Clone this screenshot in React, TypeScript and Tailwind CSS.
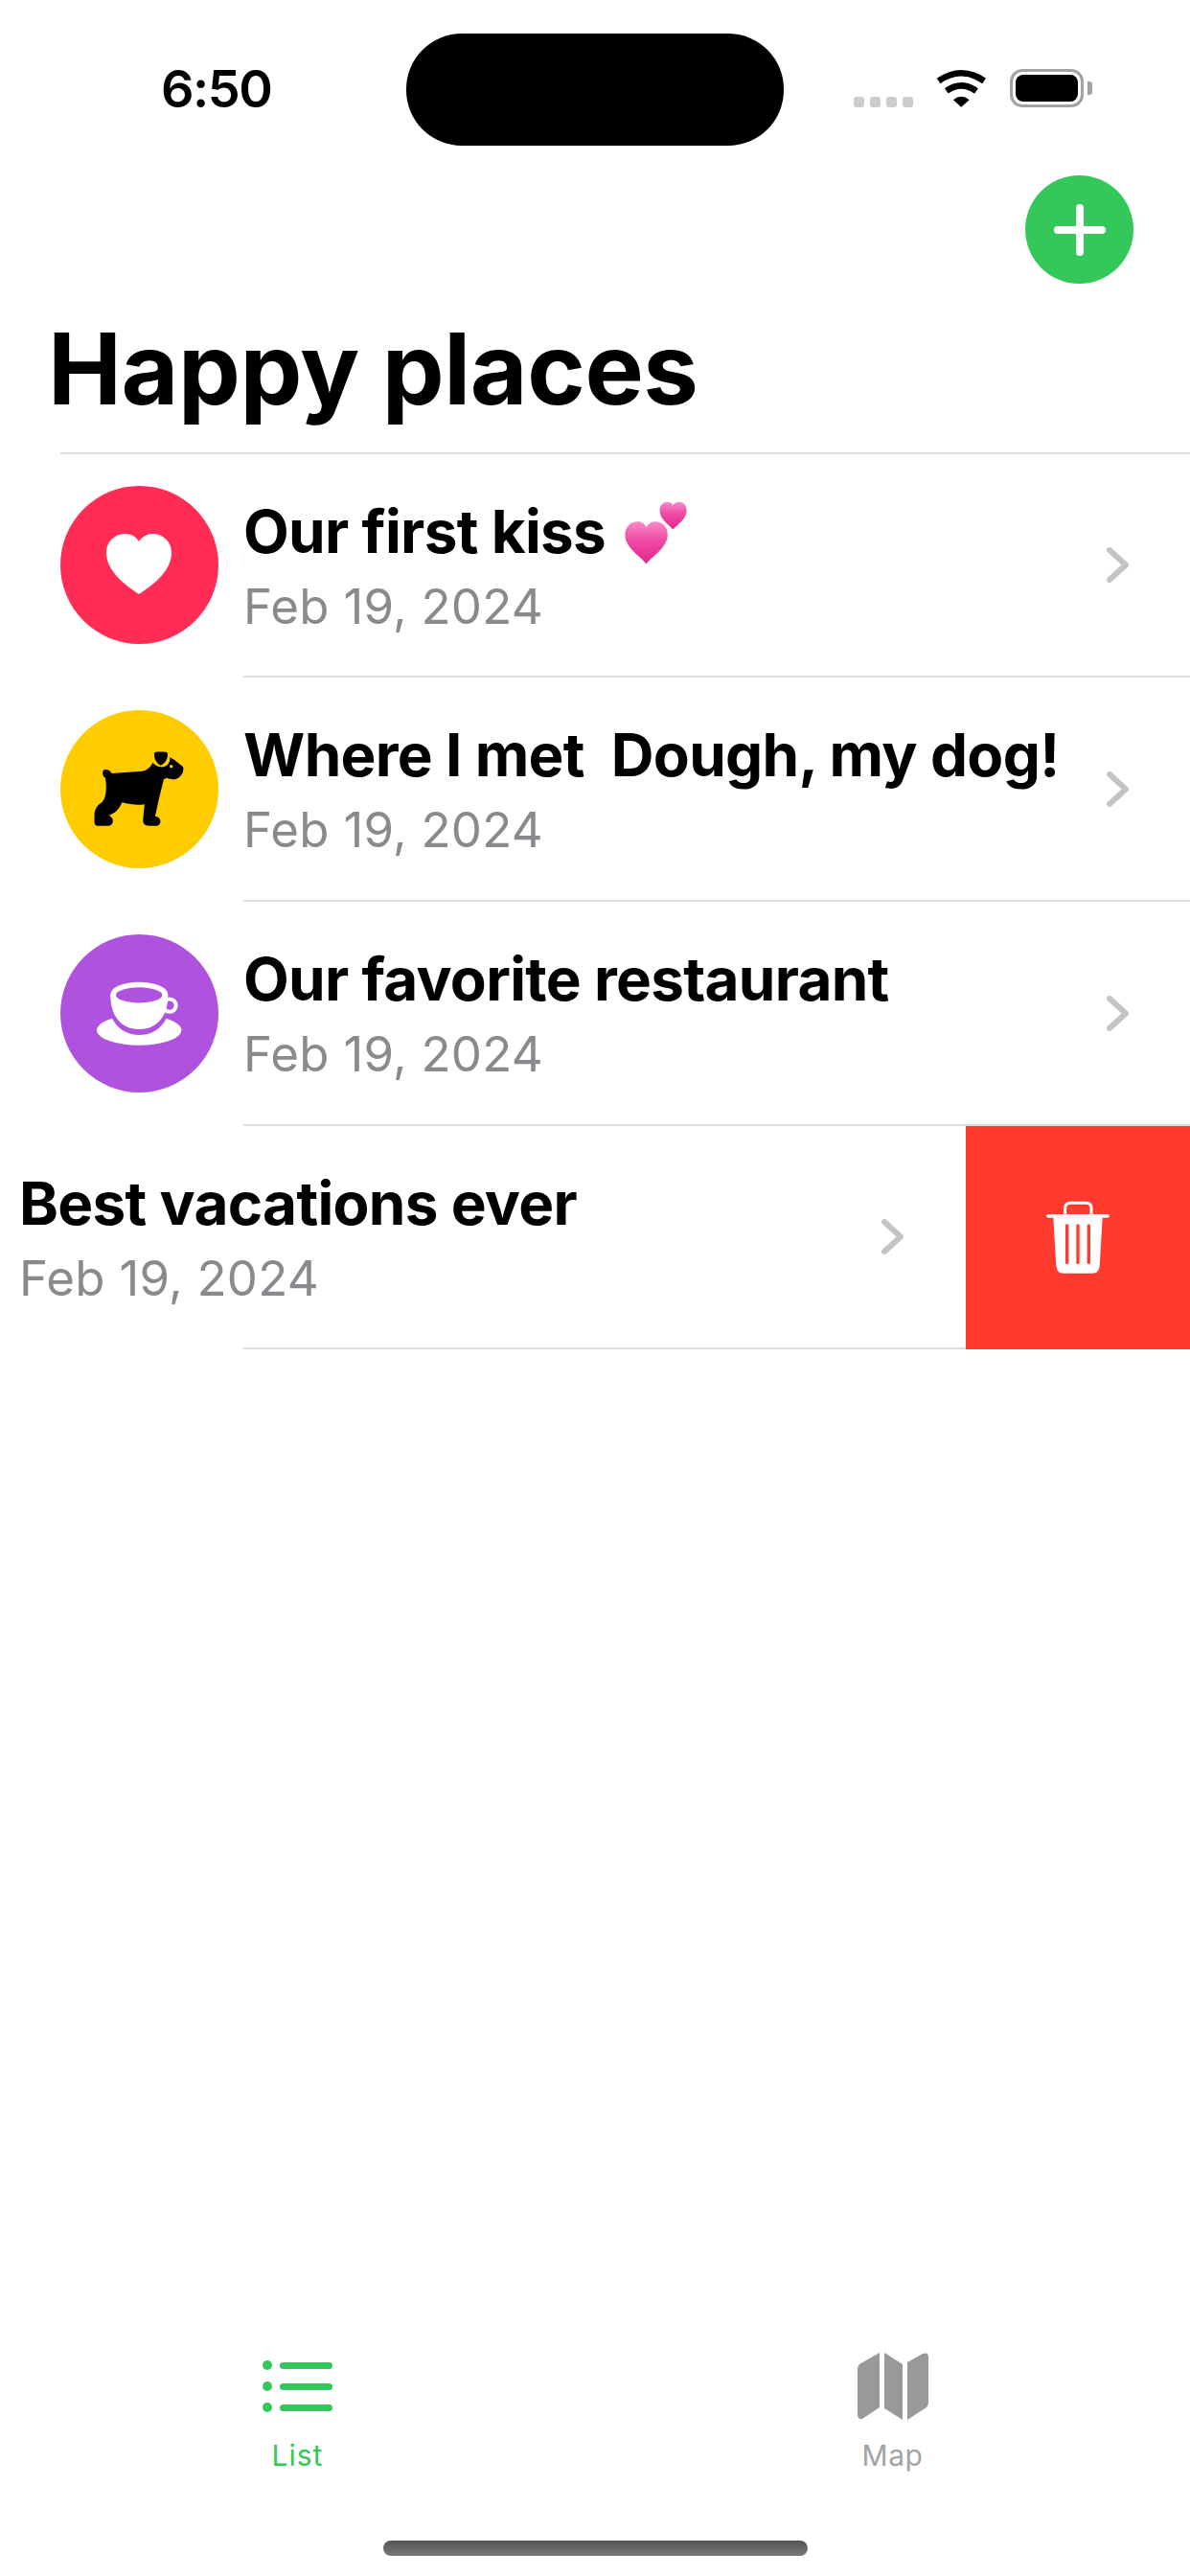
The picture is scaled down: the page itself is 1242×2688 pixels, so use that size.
import { ReactNode } from "react";

function Heart() {
  return (
    <svg viewBox="0 0 165 165" className="h-[165px] w-[165px]">
      <path
        d="M82 113 C70 105 48 90 48 70 C48 57 58 50 68 50 C74 50 79 53 82 58 C85 53 91 50 96 50 C106 50 116 57 116 70 C116 90 94 105 82 113 Z"
        fill="white"
      />
    </svg>
  );
}

function Dog() {
  return (
    <svg viewBox="40 35 492 492" className="h-[165px] w-[165px]">
      <path
        d="M178 220 C170 222 168 240 180 246 L182 262 C184 290 180 315 165 325 C150 335 146 350 146 365 L146 385 Q147 395 158 395 L190 395 C208 392 208 368 190 362 C210 358 225 340 232 322 C255 328 280 332 302 328 L297 378 C297 390 305 395 315 395 L340 395 C356 392 356 368 335 365 L347 310 L362 250 L372 246 C385 252 400 252 408 245 C420 238 425 222 422 212 L392 188 L380 182 C384 200 368 215 352 212 C340 210 332 204 328 198 C320 212 310 222 295 225 L200 232 C196 224 188 218 178 220 Z"
        fill="black"
      />
      <path
        d="M332 172 Q332 165 342 165 L362 165 Q374 165 374 172 C374 188 366 200 352 207 C340 200 332 188 332 172 Z"
        fill="black"
      />
      <circle cx="385" cy="210" r="5" fill="#ffcc00" />
    </svg>
  );
}

function Cup() {
  return (
    <svg viewBox="40 17 492 492" className="h-[165px] w-[165px]">
      <ellipse cx="285" cy="315" rx="132" ry="47" fill="white" />
      <path
        d="M196 205 C196 265 225 318 285 318 C345 318 375 265 375 205 Z"
        fill="white"
        stroke="#af52de"
        strokeWidth="24"
      />
      <circle cx="380" cy="238" r="20" fill="none" stroke="white" strokeWidth="12" />
      <path d="M196 205 C196 180 240 165 285 165 C330 165 375 180 375 205 C375 268 345 312 285 312 C225 312 196 268 196 205 Z" fill="white" />
      <ellipse cx="285" cy="206" rx="72" ry="24" fill="#af52de" />
    </svg>
  );
}

function Chevron() {
  return (
    <svg viewBox="0 0 23 37" className="h-[37px] w-[23px] shrink-0">
      <path
        d="M3 3 L20 18.5 L3 34"
        fill="none"
        stroke="#c4c4c7"
        strokeWidth="6"
        strokeLinecap="round"
        strokeLinejoin="round"
      />
    </svg>
  );
}

function Hearts() {
  return (
    <svg viewBox="90 95 200 205" className="-mb-[3px] ml-[5px] inline-block h-[68px] w-[67px] -translate-y-[5px]">
      <defs>
        <linearGradient id="pink" x1="0" y1="0" x2="0" y2="1">
          <stop offset="0" stopColor="#f98ccb" />
          <stop offset="0.4" stopColor="#ef4fa6" />
          <stop offset="1" stopColor="#e3248c" />
        </linearGradient>
      </defs>
      <path
        d="M244 187 C230 172 202 155 202 127 C202 110 214 100 227 100 C234 100 241 104 244 111 C248 104 255 100 262 100 C276 100 287 110 287 127 C287 155 258 172 244 187 Z"
        fill="url(#pink)"
      />
      <path
        d="M160 295 C140 270 93 245 93 203 C93 178 112 162 132 162 C144 162 155 168 160 180 C166 168 177 162 189 162 C210 162 227 178 227 203 C227 245 180 270 160 295 Z"
        fill="url(#pink)"
      />
    </svg>
  );
}

function RowText({ title, extra }: { title: string; extra?: ReactNode }) {
  return (
    <div className="min-w-0 flex-1">
      <div className="whitespace-pre text-[62px] leading-[85px] font-bold tracking-[-0.7px] text-black">
        {title}
        {extra}
      </div>
      <div className="text-[51px] leading-[71px] tracking-[0.25px] text-[#8a8a8e]">Feb 19, 2024</div>
    </div>
  );
}

function PlaceRow({
  color,
  icon,
  title,
  extra,
  height,
}: {
  color: string;
  icon: ReactNode;
  title: string;
  extra?: ReactNode;
  height: string;
}) {
  return (
    <>
      <div className={`flex items-center gap-[26px] pl-[63px] pr-[64px] ${height}`}>
        <div className={`h-[165px] w-[165px] shrink-0 rounded-full ${color}`}>{icon}</div>
        <RowText title={title} extra={extra} />
        <Chevron />
      </div>
      <div className="ml-[254px] h-[2px] bg-[#dedee0]" />
    </>
  );
}

export default function App() {
  return (
    <div className="flex h-[2688px] w-[1242px] flex-col overflow-hidden bg-white font-['Inter',sans-serif]">
      {/* status bar */}
      <div className="flex h-[183px] items-start pt-[35px]">
        <div className="ml-[168px] w-[116px] pt-[35px] text-[54px] leading-[46px] font-semibold tracking-[-1.5px] whitespace-nowrap text-black">
          6:50
        </div>
        <div className="ml-[140px] h-[117px] w-[394px] rounded-[58px] bg-black" />
        <div className="ml-[73px] flex items-start pt-[37px]">
          <div className="mt-[29px] flex gap-[6px]">
            <div className="h-[11px] w-[11px] rounded-[3px] bg-[#cccccc]" />
            <div className="h-[11px] w-[11px] rounded-[3px] bg-[#cccccc]" />
            <div className="h-[11px] w-[11px] rounded-[3px] bg-[#cccccc]" />
            <div className="h-[11px] w-[11px] rounded-[3px] bg-[#cccccc]" />
          </div>
          <svg viewBox="318 65 160 122" className="ml-[24px] h-[40px] w-[53px]">
            <path d="M325 103 Q397 53 470 103" fill="none" stroke="black" strokeWidth="20" />
            <path d="M350 135 Q397 101 445 135" fill="none" stroke="black" strokeWidth="20" />
            <path d="M372 163 Q397 143 423 163 L397 186 Z" fill="black" />
          </svg>
          <div className="ml-[24px] h-[40px] w-[77px] rounded-[13px] border-[3px] border-[#a3a3a3] p-[3px]">
            <div className="h-full w-full rounded-[8px] bg-black" />
          </div>
          <div className="mt-[13px] ml-[4px] h-[14px] w-[5px] rounded-r-[3px] bg-[#a3a3a3]" />
        </div>
      </div>

      {/* add button */}
      <div className="flex justify-end pr-[59px]">
        <button type="button" className="flex h-[113px] w-[113px] items-center justify-center rounded-full bg-[#34c759]">
          <svg viewBox="0 0 54 54" className="h-[54px] w-[54px]">
            <path d="M27 4 V50 M4 27 H50" stroke="white" strokeWidth="8" strokeLinecap="round" />
          </svg>
        </button>
      </div>

      <h1 className="mt-[27px] h-[149px] pl-[50px] text-[103px] leading-[124px] font-bold tracking-[-0.4px] text-black">
        Happy places
      </h1>
      <div className="ml-[63px] h-[2px] bg-[#dedee0]" />

      <PlaceRow height="h-[231px]" color="bg-[#ff2d55]" icon={<Heart />} title="Our first kiss " extra={<Hearts />} />
      <PlaceRow height="h-[232px]" color="bg-[#ffcc00]" icon={<Dog />} title="Where I met  Dough, my dog!" />
      <PlaceRow height="h-[232px]" color="bg-[#af52de]" icon={<Cup />} title="Our favorite restaurant" />

      {/* swiped row */}
      <div className="flex h-[233px]">
        <div className="flex-1">
          <div className="flex h-[231px] items-center pr-[65px] pl-[20px]">
            <RowText title="Best vacations ever" />
            <Chevron />
          </div>
          <div className="ml-[254px] h-[2px] bg-[#dedee0]" />
        </div>
        <div className="flex w-[234px] items-center justify-center bg-[#ff3b30]">
          <svg viewBox="60 80 270 260" className="h-[87px] w-[90px]">
            <path d="M155 140 V118 Q155 101 172 101 H220 Q237 101 237 118 V140" fill="none" stroke="white" strokeWidth="9" />
            <path d="M102 142 H288" stroke="white" strokeWidth="11" strokeLinecap="round" />
            <path d="M118 146 H272 L263 298 Q261 322 240 322 H150 Q129 322 127 298 Z" fill="white" />
            <path d="M161 172 V288 M195 172 V288 M229 172 V288" stroke="#ff3b30" strokeWidth="10" strokeLinecap="round" />
          </svg>
        </div>
      </div>

      {/* tab bar */}
      <div className="mt-auto grid grid-cols-2">
        <div className="flex flex-col items-center">
          <svg viewBox="0 0 74 70" className="h-[70px] w-[74px]">
            <g fill="#34c759">
              <circle cx="5" cy="13" r="5" />
              <circle cx="5" cy="35" r="5" />
              <circle cx="5" cy="57" r="5" />
              <rect x="18" y="10" width="55" height="7" rx="3.5" />
              <rect x="18" y="32" width="55" height="7" rx="3.5" />
              <rect x="18" y="54" width="55" height="7" rx="3.5" />
            </g>
          </svg>
          <div className="mt-[19px] text-[30px] leading-[36px] font-normal tracking-[1px] text-[#34c759]">List</div>
        </div>
        <div className="flex flex-col items-center">
          <svg viewBox="894 2455 74 70" className="h-[70px] w-[74px]">
            <g fill="#999999">
              <path d="M917 2455 V2512 L899 2524 Q894 2525 894 2519 V2472 Q894 2469 896 2467 Z" />
              <path d="M922 2455 L941 2467 V2525 L922 2513 Z" />
              <path d="M946 2465 L962 2456 Q968 2454 968 2460 V2507 Q968 2510 966 2512 L946 2525 Z" />
            </g>
          </svg>
          <div className="mt-[19px] text-[30px] leading-[36px] font-normal tracking-[0.5px] text-[#a3a3a6]">Map</div>
        </div>
      </div>
      <div className="mt-[71px] mb-[21px] flex justify-center">
        <div className="h-[16px] w-[443px] rounded-full bg-gradient-to-b from-[#555555] to-[#777777]" />
      </div>
    </div>
  );
}
